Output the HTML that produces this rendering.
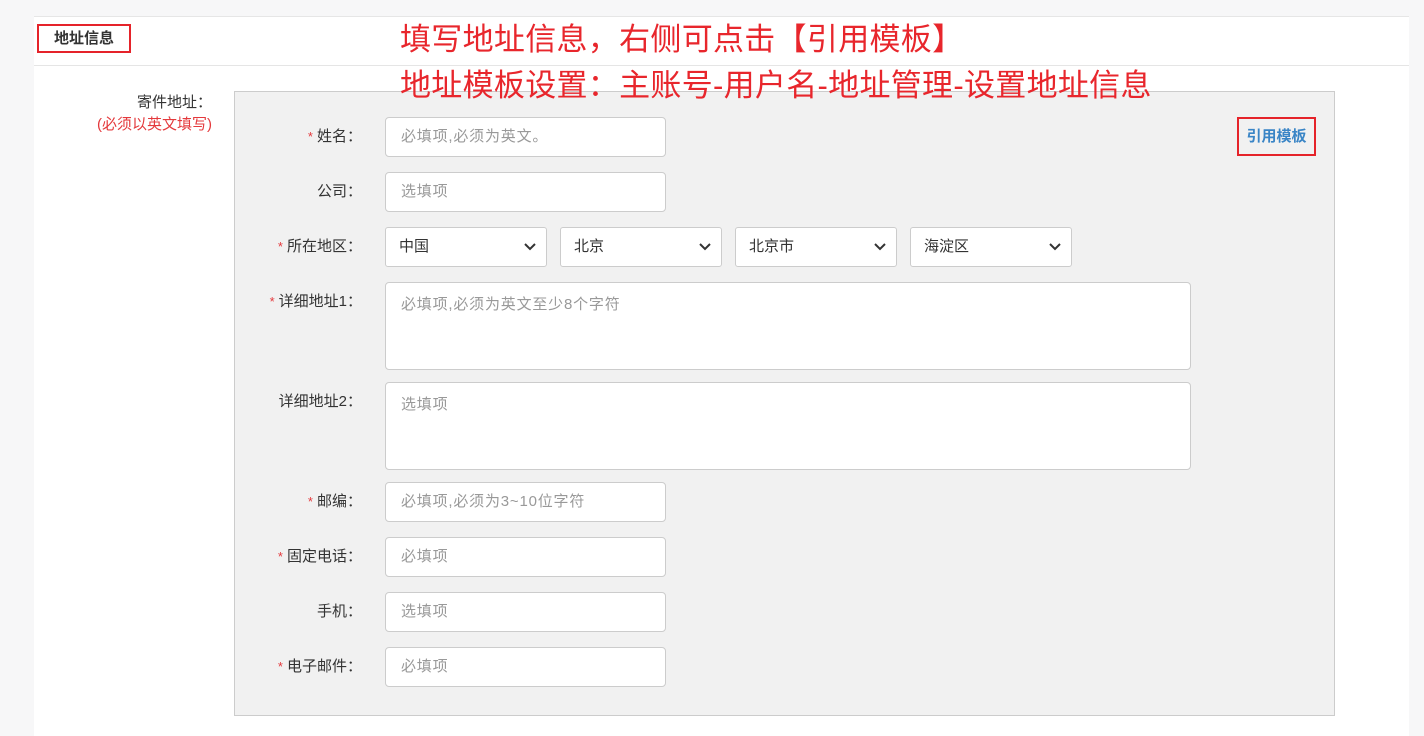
<!DOCTYPE html>
<html><head><meta charset="utf-8"><style>
*{box-sizing:border-box;margin:0;padding:0}
body{width:1424px;height:731px;background:#f7f7f8;font-family:"Liberation Sans","Noto Sans CJK SC",sans-serif;font-size:15px;color:#333;position:relative;overflow:hidden}
.abs{position:absolute}
.card{left:34px;top:16px;width:1375px;height:720px;background:#fff;border-top:1px solid #e6e6e6}
.hline{left:34px;top:65px;width:1375px;height:1px;background:#e5e5e5}
.title{left:37px;top:24px;width:94px;height:29px;border:2px solid #e5232a;font-weight:bold;font-size:15px;line-height:25px;text-align:center;color:#333}
.ann{left:400px;font-size:31px;color:#e8262c;line-height:36px;white-space:nowrap;z-index:5;letter-spacing:0.3px}
.panel{left:234px;top:91px;width:1101px;height:625px;background:#f1f1f1;border:1px solid #ccc}
.lab{width:140px;left:222px;text-align:right;line-height:40px;color:#333}
.lab i{font-style:normal;color:#e4393c;font-size:13px;margin-right:4px}
.inp{background:#fff;border:1px solid #ccc;border-radius:4px;color:#999;padding-left:15px;line-height:38px;letter-spacing:0.8px}
.sel{background:#fff;border:1px solid #ccc;border-radius:3px;color:#333;padding-left:13px;line-height:38px;width:162px;height:40px}
.sel svg{position:absolute;right:10px;top:15px}
.ta{line-height:normal;padding-top:10px}
</style></head><body>
<div class="abs card"></div>
<div class="abs hline"></div>
<div class="abs title">地址信息</div>
<div class="abs ann" style="top:22px">填写地址信息，右侧可点击【引用模板】</div>
<div class="abs ann" style="top:68px">地址模板设置：主账号-用户名-地址管理-设置地址信息</div>
<div class="abs" style="left:50px;top:92px;width:162px;text-align:right;line-height:22px">寄件地址：<br><span style="color:#e4393c">(必须以英文填写)</span></div>
<div class="abs panel"></div>
<div class="abs" style="left:1237px;top:117px;width:79px;height:39px;border:2px solid #e5232a;color:#3a85c6;font-weight:bold;text-align:center;line-height:35px">引用模板</div>

<div class="abs lab" style="top:117px"><i>*</i>姓名：</div>
<div class="abs inp" style="left:385px;top:117px;width:281px;height:40px">必填项,必须为英文。</div>
<div class="abs lab" style="top:172px">公司：</div>
<div class="abs inp" style="left:385px;top:172px;width:281px;height:40px">选填项</div>
<div class="abs lab" style="top:227px"><i>*</i>所在地区：</div>
<div class="abs sel" style="left:385px;top:227px">中国<svg width="12" height="8"><path d="M1 1l5 5 5-5" stroke="#333" stroke-width="2" fill="none"/></svg></div>
<div class="abs sel" style="left:560px;top:227px">北京<svg width="12" height="8"><path d="M1 1l5 5 5-5" stroke="#333" stroke-width="2" fill="none"/></svg></div>
<div class="abs sel" style="left:735px;top:227px">北京市<svg width="12" height="8"><path d="M1 1l5 5 5-5" stroke="#333" stroke-width="2" fill="none"/></svg></div>
<div class="abs sel" style="left:910px;top:227px">海淀区<svg width="12" height="8"><path d="M1 1l5 5 5-5" stroke="#333" stroke-width="2" fill="none"/></svg></div>
<div class="abs lab" style="top:282px"><i>*</i>详细地址1：</div>
<div class="abs inp ta" style="left:385px;top:282px;width:806px;height:88px">必填项,必须为英文至少8个字符</div>
<div class="abs lab" style="top:382px">详细地址2：</div>
<div class="abs inp ta" style="left:385px;top:382px;width:806px;height:88px">选填项</div>
<div class="abs lab" style="top:482px"><i>*</i>邮编：</div>
<div class="abs inp" style="left:385px;top:482px;width:281px;height:40px">必填项,必须为3~10位字符</div>
<div class="abs lab" style="top:537px"><i>*</i>固定电话：</div>
<div class="abs inp" style="left:385px;top:537px;width:281px;height:40px">必填项</div>
<div class="abs lab" style="top:592px">手机：</div>
<div class="abs inp" style="left:385px;top:592px;width:281px;height:40px">选填项</div>
<div class="abs lab" style="top:647px"><i>*</i>电子邮件：</div>
<div class="abs inp" style="left:385px;top:647px;width:281px;height:40px">必填项</div>
</body></html>
